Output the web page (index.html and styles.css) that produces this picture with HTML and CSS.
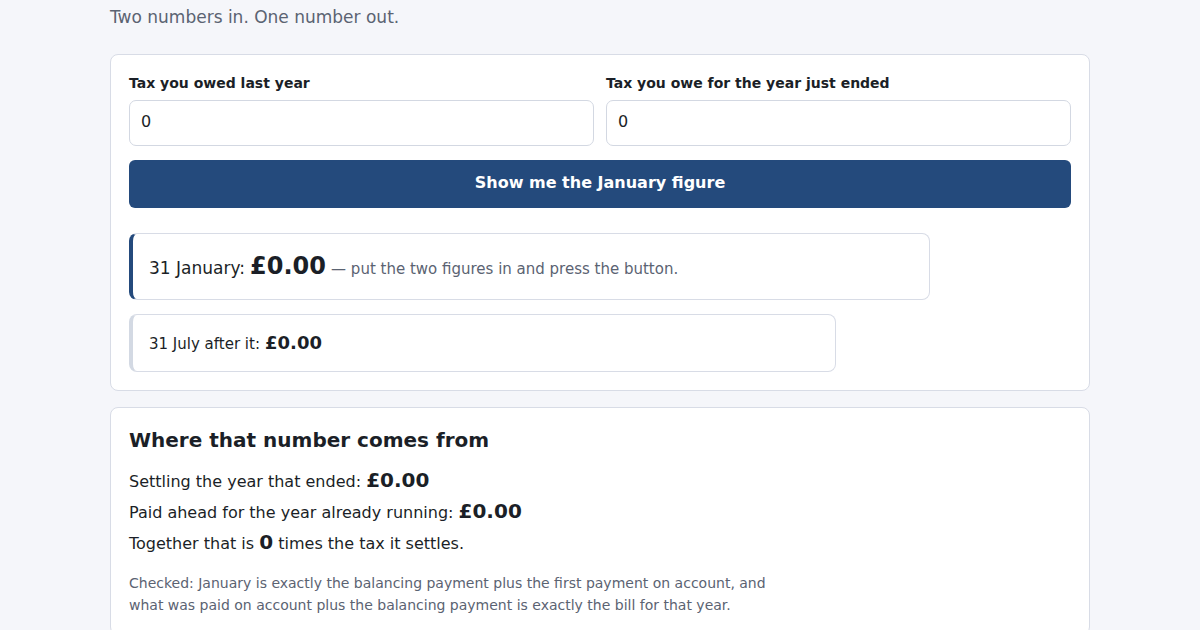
FILE: index.html
```html
<!DOCTYPE html>
<html lang="en">
<head>
<meta charset="utf-8">
<title>January figure</title>
<link rel="stylesheet" href="styles.css">
</head>
<body>
<main class="wrap">
  <p class="lede">Two numbers in. One number out.</p>
  <section class="card">
    <div class="fields">
      <label class="field">
        <span class="label">Tax you owed last year</span>
        <input class="input" type="text" value="0">
      </label>
      <label class="field">
        <span class="label">Tax you owe for the year just ended</span>
        <input class="input" type="text" value="0">
      </label>
    </div>
    <button class="btn" type="button">Show me the January figure</button>
    <div class="result result-main">
      <span class="r-label">31 January:</span> <strong class="r-big">£0.00</strong> <span class="r-note">— put the two figures in and press the button.</span>
    </div>
    <div class="result result-sub">
      <span class="r-label-sm">31 July after it:</span> <strong class="r-mid">£0.00</strong>
    </div>
  </section>
  <section class="card card-2">
    <h2 class="h2">Where that number comes from</h2>
    <p class="line">Settling the year that ended: <strong class="amt">£0.00</strong></p>
    <p class="line">Paid ahead for the year already running: <strong class="amt">£0.00</strong></p>
    <p class="line">Together that is <strong class="amt">0</strong> times the tax it settles.</p>
    <p class="check">Checked: January is exactly the balancing payment plus the first payment on account, and what was paid on account plus the balancing payment is exactly the bill for that year.</p>
  </section>
</main>
</body>
</html>
```
FILE: styles.css
```css
* { box-sizing: border-box; }
html, body { margin: 0; padding: 0; }
body {
  background: #f5f6fa;
  font-family: "DejaVu Sans", sans-serif;
  color: #1b1f27;
}
.wrap {
  width: 980px;
  margin: 0 auto;
  padding-top: 5px;
}
.lede {
  margin: 0 0 25px;
  font-size: 17px;
  line-height: 24px;
  color: #5b6372;
}
.card {
  background: #fff;
  border: 1px solid #d8dce6;
  border-radius: 8px;
  padding: 18px;
}
.fields {
  display: grid;
  grid-template-columns: 1fr 1fr;
  gap: 12px;
}
.field { display: flex; flex-direction: column; gap: 7px; }
.label {
  font-size: 14px;
  font-weight: bold;
  line-height: 20px;
  color: #1b1f27;
}
.input {
  height: 46px;
  border: 1px solid #d3d8e2;
  border-radius: 7px;
  padding: 0 11px 3px;
  font-family: "DejaVu Sans", sans-serif;
  font-size: 16px;
  color: #1b1f27;
  background: #fff;
  outline: none;
}
.btn {
  display: block;
  width: 100%;
  height: 48px;
  margin-top: 14px;
  padding: 0 0 4px;
  border: 0;
  border-radius: 6px;
  background: #244a7c;
  color: #fff;
  font-family: "DejaVu Sans", sans-serif;
  font-weight: bold;
  font-size: 16px;
}
.result {
  border: 1px solid #d8dce6;
  border-radius: 8px;
  background: #fff;
  padding-left: 16px;
  padding-right: 16px;
}
.result-main {
  width: 85%;
  margin-top: 25px;
  border-left: 4px solid #244a7c;
  padding-top: 18px;
  padding-bottom: 14px;
  line-height: 32px;
}
.result-sub {
  width: 75%;
  margin-top: 14px;
  border-left: 4px solid #d3d9e3;
  padding-top: 16px;
  padding-bottom: 14px;
  line-height: 26px;
}
.r-label { font-size: 17px; color: #1b1f27; }
.r-big { font-size: 24px; font-weight: bold; line-height: 1; }
.r-note { font-size: 15px; color: #5b6372; }
.r-label-sm { font-size: 15px; }
.r-mid { font-size: 18px; font-weight: bold; line-height: 1; }
.card-2 { margin-top: 16px; padding-top: 18px; }
.h2 {
  margin: 0 0 12px;
  font-size: 20px;
  line-height: 28px;
  font-weight: bold;
}
.line {
  margin: 0;
  font-size: 16px;
  line-height: 31px;
}
.amt { font-size: 20px; line-height: 1; }
.check {
  margin: 13px 0 0;
  max-width: 660px;
  font-size: 14px;
  line-height: 22px;
  color: #5b6372;
}
```
